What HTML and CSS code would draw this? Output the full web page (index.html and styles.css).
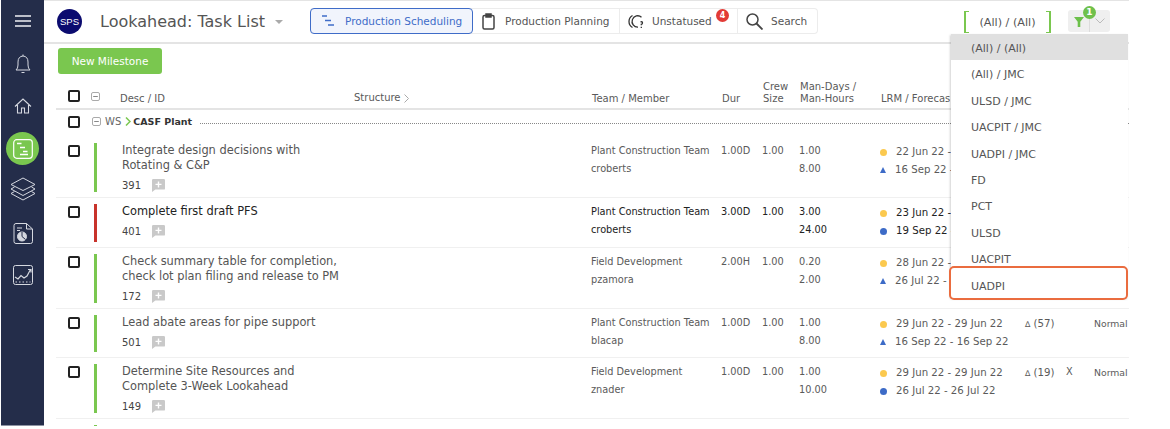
FILE: index.html
```html
<!DOCTYPE html>
<html lang="en">
<head>
<meta charset="utf-8">
<title>Lookahead: Task List</title>
<link rel="stylesheet" href="styles.css">
</head>
<body>
<svg class="defs" width="0" height="0" aria-hidden="true">
  <symbol id="comment" viewBox="0 0 13 13"><path d="M0 1.2Q0 0 1.2 0h10.6Q13 0 13 1.2v8.2q0 1.2-1.2 1.2H3.4L0 13z" fill="#c9c9c9"/><path d="M6.5 2.4v6M3.5 5.4h6" stroke="#fff" stroke-width="1.4"/></symbol>
  <symbol id="minus" viewBox="0 0 9 9"><rect x=".5" y=".5" width="8" height="8" rx="1.5" fill="none" stroke="#aaa"/><path d="M2.2 4.5h4.6" stroke="#888"/></symbol>
</svg>
<div class="app">
  <nav class="rail">
    <svg class="rail-ico burger" width="16" height="12" viewBox="0 0 16 12"><path d="M0 1h16M0 6h16M0 11h16" stroke="#eef0f4" stroke-width="1.6"/></svg>
    <svg class="rail-ico" width="16" height="20" viewBox="0 0 16 20" fill="none" stroke="#d5d8e0" stroke-width="1"><path d="M1 16q2-1.500 2-5V8q0-5.500 5-6 5 .5 5 6v3q0 3.500 2 5z"/><path d="M6.500 18.500h3M8 .5v1.500"/></svg>
    <svg class="rail-ico" width="18" height="16" viewBox="0 0 18 16" fill="none" stroke="#d5d8e0" stroke-width="1.100"><path d="M1 8.500 9 1l8 7.500M3.500 7v8h4v-5h3v5h4V7"/></svg>
    <div class="rail-active">
      <svg width="20" height="20" viewBox="0 0 20 20" fill="none" stroke="#fff"><rect x=".7" y=".7" width="18.600" height="18.600" rx="3" stroke-width="1.200"/><path d="M4 4.500h4.500M7 8.500h5M10 12.500h4.500M7 15.500h8" stroke-width="1.500"/></svg>
    </div>
    <svg class="rail-ico layers" width="26" height="26" viewBox="0 0 26 26" fill="none" stroke="#d5d8e0" stroke-width="1"><path d="M13 1 25 7.500 13 13.500 1 7.500zM4.500 10 1 12l12 6.500L25 12l-3.500-2M4.500 14.500 1 16.500 13 23l12-6.500-3.500-2"/></svg>
    <svg class="rail-ico" width="20" height="21" viewBox="0 0 20 21" fill="none" stroke="#d5d8e0" stroke-width="1"><path d="M3 .5h10.500L19.500 6v12.500q0 2-2 2H3q-2 0-2-2v-16q0-2 2-2zM13.500.5V6h6M4 5h5M4 7.500h3"/><circle cx="9" cy="13.500" r="4.500" fill="#d5d8e0"/><path d="M9 13.500V9M9 13.500l3.500 3" stroke="#242d4a"/></svg>
    <svg class="rail-ico" width="20" height="20" viewBox="0 0 20 20" fill="none" stroke="#d5d8e0" stroke-width="1"><rect x=".5" y=".5" width="19" height="19" rx="2"/><path d="m2 12 3 2 3-3.500 3 2.500 3-2 3.500-6.500M15 4.500h3V7.500" stroke-width="1.200"/><path d="M2.500 17h15" stroke-dasharray="1.500 2"/></svg>
  </nav>

  <main class="main">
    <header class="topbar">
      <div class="logo">SPS</div>
      <h1 class="title">Lookahead: Task List</h1>
      <span class="caret"></span>
      <div class="tabs">
        <div class="tab tab-active">
          <svg width="12" height="12" viewBox="0 0 12 12"><path d="M0 1h5M3 5.500h6M6 10h6" stroke="#3f6cc8" stroke-width="1.500"/></svg>
          <span>Production Scheduling</span>
        </div>
        <div class="tab tab-plan">
          <svg width="13" height="17" viewBox="0 0 13 17" fill="none" stroke="#444" stroke-width="1.500"><rect x="1" y="2.500" width="11" height="13.500" rx="1.500"/><rect x="4" y="1" width="5" height="3" fill="#444"/></svg>
          <span>Production Planning</span>
        </div>
        <div class="tab tab-status">
          <svg width="17" height="15" viewBox="0 0 17 15" fill="none" stroke="#333" stroke-width="1.300"><path d="M4.500 1.500Q1 3.500 1 7.500t3.500 6"/><path d="M13.500 3.200A5.700 5.700 0 1 0 10 13.200"/><path d="M12.500 7.800q2-.3 2 1.100 0 1-1.200 1.400v.9M13.300 12.800v1.200"/></svg>
          <span>Unstatused</span>
          <b class="count">4</b>
        </div>
        <div class="tab tab-search">
          <svg width="17" height="17" viewBox="0 0 17 17" fill="none" stroke="#444" stroke-width="1.500"><circle cx="6.500" cy="6.500" r="5.500"/><path d="m10.500 10.500 6 6" stroke-width="1.800"/></svg>
          <span>Search</span>
        </div>
      </div>
      <div class="scope">(All) / (All)</div>
      <div class="filter">
        <svg class="funnel" width="10" height="10" viewBox="0 0 10 10"><path d="M0 0h10L6.300 4.700V10H3.700V4.700z" fill="#6cc04a"/></svg>
        <b class="filter-badge">1</b>
        <svg class="chev" width="10" height="6" viewBox="0 0 10 6" fill="none" stroke="#bbb"><path d="m.5.500 4.500 4.500L9.500.5"/></svg>
      </div>
    </header>

    <div class="actions"><button class="btn-new">New Milestone</button></div>

    <div class="grid grid-head">
      <span class="box"></span>
      <svg class="min" width="9" height="9"><use href="#minus"/></svg>
      <span class="h-desc">Desc / ID</span>
      <span class="h-struct">Structure <svg width="5" height="9" viewBox="0 0 5 9" fill="none" stroke="#aaa"><path d="m.5.500 4 4-4 4"/></svg></span>
      <span>Team / Member</span>
      <span>Dur</span>
      <span>Crew<br>Size</span>
      <span>Man-Days /<br>Man-Hours</span>
      <span class="h-lrm">LRM / Forecast</span>
    </div>

    <div class="group">
      <span class="box"></span>
      <svg class="group-min" width="9" height="9"><use href="#minus"/></svg>
      <span class="ws">WS</span>
      <svg class="group-chev" width="6" height="9" viewBox="0 0 6 9" fill="none" stroke="#7ac74f" stroke-width="1.500"><path d="m1 .5 4 4-4 4"/></svg>
      <b class="group-name">CASF Plant</b>
      <span class="dots"></span>
    </div>

    <div class="grid row">
      <span class="box"></span><span class="bar"></span>
      <div class="desc"><p>Integrate design decisions with<br>Rotating &amp; C&amp;P</p><div class="id">391 <svg width="13" height="13"><use href="#comment"/></svg></div></div>
      <div class="cell">Plant Construction Team<br>croberts</div>
      <div class="cell">1.00D</div><div class="cell">1.00</div><div class="cell">1.00<br>8.00</div>
      <div class="cell dates clip"><div><i class="dot yellow"></i>22 Jun 22 -</div><div><i class="tri"></i>16 Sep 22 -</div></div>
    </div>

    <div class="grid row dark">
      <span class="box"></span><span class="bar red"></span>
      <div class="desc"><p>Complete first draft PFS</p><div class="id">401 <svg width="13" height="13"><use href="#comment"/></svg></div></div>
      <div class="cell">Plant Construction Team<br>croberts</div>
      <div class="cell">3.00D</div><div class="cell">1.00</div><div class="cell">3.00<br>24.00</div>
      <div class="cell dates clip"><div><i class="dot yellow"></i>23 Jun 22 -</div><div><i class="dot blue"></i>19 Sep 22 -</div></div>
    </div>

    <div class="grid row">
      <span class="box"></span><span class="bar"></span>
      <div class="desc"><p>Check summary table for completion,<br>check lot plan filing and release to PM</p><div class="id">172 <svg width="13" height="13"><use href="#comment"/></svg></div></div>
      <div class="cell">Field Development<br>pzamora</div>
      <div class="cell">2.00H</div><div class="cell">1.00</div><div class="cell">0.20<br>2.00</div>
      <div class="cell dates clip"><div><i class="dot yellow"></i>28 Jun 22 -</div><div><i class="tri"></i>26 Jul 22 -</div></div>
    </div>

    <div class="grid row">
      <span class="box"></span><span class="bar"></span>
      <div class="desc"><p>Lead abate areas for pipe support</p><div class="id">501 <svg width="13" height="13"><use href="#comment"/></svg></div></div>
      <div class="cell">Plant Construction Team<br>blacap</div>
      <div class="cell">1.00D</div><div class="cell">1.00</div><div class="cell">1.00<br>8.00</div>
      <div class="cell dates"><div><i class="dot yellow"></i>29 Jun 22 - 29 Jun 22</div><div><i class="tri"></i>16 Sep 22 - 16 Sep 22</div></div>
      <div class="cell wide"><small>∆</small> (57)</div><div class="cell"></div><div class="cell level">Normal</div>
    </div>

    <div class="grid row">
      <span class="box"></span><span class="bar"></span>
      <div class="desc"><p>Determine Site Resources and<br>Complete 3-Week Lookahead</p><div class="id">149 <svg width="13" height="13"><use href="#comment"/></svg></div></div>
      <div class="cell">Field Development<br>znader</div>
      <div class="cell">1.00D</div><div class="cell">1.00</div><div class="cell">1.00<br>10.00</div>
      <div class="cell dates"><div><i class="dot yellow"></i>29 Jun 22 - 29 Jun 22</div><div><i class="dot blue"></i>26 Jul 22 - 26 Jul 22</div></div>
      <div class="cell wide"><small>∆</small> (19)</div><div class="cell">X</div><div class="cell level">Normal</div>
    </div>

    <div class="grid row"><span></span><span class="bar"></span></div>

    <ul class="menu">
      <li class="selected">(All) / (All)</li>
      <li>(All) / JMC</li>
      <li>ULSD / JMC</li>
      <li>UACPIT / JMC</li>
      <li>UADPI / JMC</li>
      <li>FD</li>
      <li>PCT</li>
      <li>ULSD</li>
      <li>UACPIT</li>
      <li class="marked">UADPI</li>
    </ul>
  </main>
</div>
</body>
</html>
```

FILE: styles.css
```css
* { box-sizing: border-box; }
html, body { margin: 0; padding: 0; background: #fff; height: 429px; overflow: hidden; }
body { font-family: "DejaVu Sans", Verdana, sans-serif; font-size: 10px; color: #5a5a5a; }
.defs { position: absolute; }
p, h1, ul { margin: 0; padding: 0; }

.app { display: flex; width: 1128px; height: 426px; margin-left: 1px; }

.rail { width: 43px; flex: none; background: #242d4a; display: flex; flex-direction: column; align-items: center; border-bottom: 1px solid #8d93a3; }
.rail-ico { flex: none; display: block; }
.burger { margin-top: 15px; }
.rail-ico:nth-child(2) { margin-top: 27px; }
.rail-ico:nth-child(3) { margin-top: 24px; }
.rail-active { flex: none; margin-top: 18px; width: 33px; height: 33px; border-radius: 50%; background: #7ac74f; display: flex; align-items: center; justify-content: center; }
.layers { margin-top: 12px; }
.rail-ico:nth-child(6) { margin-top: 20px; }
.rail-ico:nth-child(7) { margin-top: 21px; }

.main { position: relative; flex: 1; min-width: 0; overflow: hidden; border-top: 1px solid #e4e4e4; }

.topbar { position: relative; height: 43px; border-bottom: 2px solid #e4e4e4; display: flex; align-items: center; padding-left: 13px; }
.logo { width: 25px; height: 25px; flex: none; border-radius: 50%; background: #0b0b6f; color: #fff; font: 9.500px/25px "Liberation Sans", Arial, sans-serif; text-align: center; margin-top: -1px; }
.title { font-size: 16px; font-weight: 400; color: #555; margin-left: 18px; white-space: nowrap; line-height: 20px; }
.caret { width: 0; height: 0; border-left: 4px solid transparent; border-right: 4px solid transparent; border-top: 4px solid #aaa; margin-left: 10px; }
.tabs { display: flex; margin-left: 27px; height: 26px; margin-top: -1px; border: 1px solid #ececec; border-left: 0; border-radius: 4px; font-size: 10.500px; }
.tab { display: flex; align-items: center; white-space: nowrap; border-right: 1px solid #ececec; position: relative; color: #555; }
.tab-active { width: 163px; margin: -1px 0 -1px 0; padding-left: 11px; gap: 11px; border: 1.500px solid #3f6cc8; border-radius: 4px; background: #f1f4fc; color: #3f6cc8; }
.tab-plan { width: 147px; padding-left: 9px; gap: 10px; }
.tab-status { width: 118px; padding-left: 8px; gap: 7px; }
.tab-search { width: 79px; padding-left: 8px; gap: 8px; border-right: 0; }
.count { position: absolute; left: 96px; top: 0; width: 13px; height: 13px; border-radius: 50%; background: #e23b36; color: #fff; font-size: 8px; line-height: 13px; text-align: center; }
.scope { position: absolute; left: 920px; top: 10px; width: 87px; height: 22px; border: solid #7ac74f; border-width: 1px 2px; border-image: linear-gradient(to right, #7ac74f 0 4px, transparent 4px 83px, #7ac74f 83px) 1; font-size: 11.200px; line-height: 22px; text-align: center; color: #555; }
.filter { position: absolute; left: 1024px; top: 9px; width: 42px; height: 22px; border-radius: 3px; background: #efefef; }
.filter::after { content: ""; position: absolute; left: 21px; top: 0; bottom: 0; width: 1px; background: #dcdcdc; }
.funnel { position: absolute; left: 6px; top: 7px; }
.filter-badge { position: absolute; left: 15px; top: -4px; z-index: 1; width: 13px; height: 13px; border-radius: 50%; background: #6fc04b; color: #fff; font-size: 9px; line-height: 13px; text-align: center; }
.chev { position: absolute; left: 27px; top: 8px; }

.actions { padding: 4px 0 0 14px; height: 37px; }
.btn-new { display: block; width: 104px; height: 26px; border: 0; border-radius: 3px; background: #7ac74f; color: #fff; font: 10.500px "DejaVu Sans", Verdana, sans-serif; padding: 0; }

.grid { display: grid; grid-template-columns: 26px 28px 469px 130px 41px 37px 81px 145px 41px 28px 1fr; margin-left: 12px; padding-left: 12px; }
.box { display: block; width: 12px; height: 12px; border: 2px solid #222; border-radius: 2px; background: #fff; }

.grid-head { position: relative; font-size: 10px; line-height: 12px; height: 29px; border-bottom: 2px solid #e4e4e4; align-items: end; padding-bottom: 5px; }
.grid-head > span { white-space: nowrap; }
.grid-head > .box { align-self: start; margin-top: 9px; }
.min { align-self: start; margin-top: 11px; margin-left: -3px; }
.h-desc { grid-column: 3; display: flex; width: 230px; margin-left: -2px; }
.h-struct { position: absolute; left: 298px; bottom: 4px; display: flex; align-items: center; gap: 3px; line-height: 12px; }
.grid-head > span:nth-of-type(n+4) { margin-left: 1px; }
.grid-head > .h-lrm { margin-left: 2px; width: 69px; overflow: hidden; }

.group { display: flex; align-items: center; height: 27px; margin-left: 12px; padding: 0 0 4px 12px; font-size: 10px; color: #666; }
.group-min { margin-left: 12px; }
.ws { margin-left: 4px; }
.group-chev { margin-left: 4px; }
.group-name { margin-left: 2px; color: #333; font-size: 9.500px; white-space: nowrap; }
.dots { flex: 1; margin: 4px 0 0 8px; border-top: 1px dotted #888; }

.row { padding-top: 6px; padding-bottom: 5px; border-bottom: 1px solid #f0f0f0; }
.row .box { margin-top: 2px; }
.bar { display: block; width: 3px; background: #7ac74f; min-height: 37px; }
.bar.red { background: #c8332b; min-height: 38px; }
.desc { font-size: 11.400px; line-height: 15px; color: #555; }
.id { display: flex; align-items: center; height: 19px; gap: 11px; font-size: 10px; color: #444; padding-top: 5px; }
.id svg { margin-top: 1px; }
.cell { font-size: 9.750px; line-height: 18px; margin-top: -1px; white-space: nowrap; color: #5a5a5a; }
.dates { font-size: 10.200px; margin-top: 0; }
.dates > div { display: flex; align-items: center; }
.clip { width: 71px; overflow: hidden; }
.wide { font-size: 10.200px; margin-top: 0; }
.wide small { font-size: 8px; }
.level { font-size: 9.300px; margin-top: 0; }
.dot, .tri { flex: none; display: block; width: 7px; height: 7px; margin-right: 9px; }
.dot { border-radius: 50%; }
.yellow { background: #fbc94f; }
.blue { background: #3d6bc7; }
.tri { height: 0; width: 0; border-left: 3.500px solid transparent; border-right: 3.500px solid transparent; border-bottom: 6px solid #3d6bc7; }
.dark .desc, .dark .cell { color: #222; }

.menu { position: absolute; left: 907px; top: 33px; width: 177px; list-style: none; background: #fff; box-shadow: -1px 1px 2px rgba(0,0,0,.18); font-size: 11px; color: #555; }
.menu li { position: relative; height: 26.400px; line-height: 26.400px; padding: 2px 0 0 20px; }
.menu .selected { background: #e0e0e0; }
.menu .marked::after { content: ""; position: absolute; left: -2px; right: 0; top: -6px; bottom: -2px; border: 2px solid #ea6c3f; border-radius: 5px; }
```
